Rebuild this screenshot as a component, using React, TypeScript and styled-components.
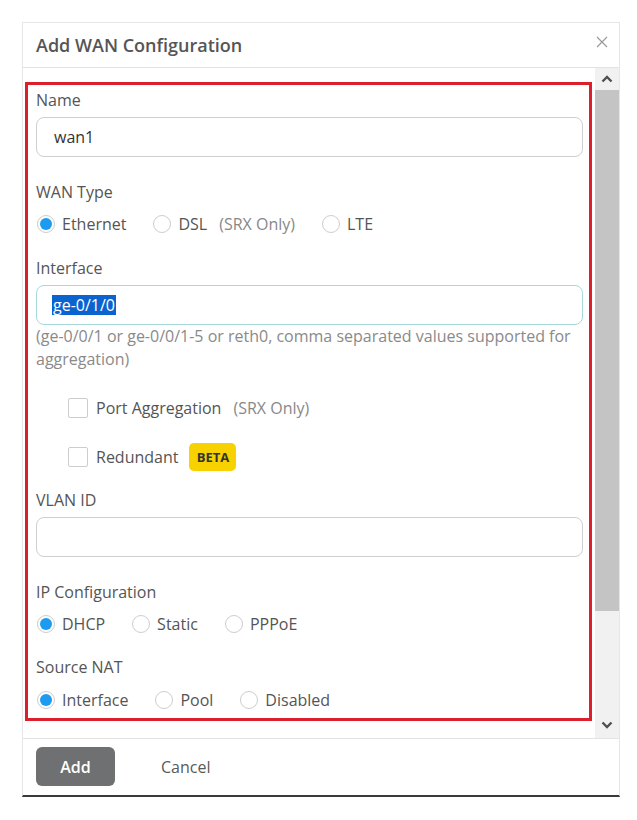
import React from "react";
import styled, { createGlobalStyle } from "styled-components";

const Global = createGlobalStyle`
  html, body { margin: 0; padding: 0; background: #ffffff; }
  body { font-family: "Open Sans", "Noto Sans", Arial, sans-serif; }
  * { box-sizing: border-box; }
`;

const Page = styled.div`
  padding: 22px 0 0 22px;
  width: 637px;
  height: 820px;
`;

const Dialog = styled.div`
  width: 598px;
  background: #fff;
  border: 1px solid #e6e6e6;
  border-bottom: 2px solid #3a3a3a;
  display: flex;
  flex-direction: column;
`;

const Header = styled.div`
  height: 45px;
  border-bottom: 1px solid #e3e3e3;
  display: flex;
  align-items: center;
  justify-content: space-between;
  padding: 0 10px 0 13px;
`;

const Title = styled.div`
  font-size: 18px;
  font-weight: 600;
  color: #555;
  line-height: 44px;
`;

const Close = styled.div`
  width: 14px;
  height: 14px;
  margin-top: -6px;
  display: flex;
  align-items: center;
  justify-content: center;
`;

const Body = styled.div`
  height: 670px;
  display: flex;
  overflow: hidden;
`;

const Content = styled.div`
  flex: 1;
  padding: 14px 3px 0 2px;
`;

const Highlight = styled.div`
  border: 3px solid #dc1f2d;
  padding: 4px 6px 7px 8px;
  display: flex;
  flex-direction: column;
`;

const Scrollbar = styled.div`
  width: 24px;
  background: #f1f1f1;
  display: flex;
  flex-direction: column;
  align-items: stretch;
`;

const Arrow = styled.div<{ $h: number }>`
  height: ${(p) => p.$h}px;
  display: flex;
  align-items: center;
  justify-content: center;
`;

const Thumb = styled.div`
  height: 521px;
  background: #c4c4c4;
`;

const Track = styled.div`
  flex: 1;
`;

const Label = styled.div<{ $mt?: number }>`
  font-size: 16px;
  line-height: 22px;
  color: #555;
  margin-top: ${(p) => p.$mt ?? 0}px;
`;

const TextBox = styled.div<{ $focus?: boolean; $mt?: number }>`
  height: 40px;
  margin-top: ${(p) => p.$mt ?? 6}px;
  border: 1px solid ${(p) => (p.$focus ? "#a6d9db" : "#cfcfcf")};
  border-radius: 8px;
  padding: 0 17px;
  display: flex;
  align-items: center;
  font-size: 16px;
  color: #333;
`;

const Selected = styled.span`
  background: #0b63d0;
  color: #fff;
  line-height: 20px;
  padding: 0 1px;
  margin-left: -2px;
`;

const Help = styled.div`
  font-size: 16px;
  line-height: 23px;
  color: #8a8a8a;
`;

const RadioRow = styled.div<{ $mt: number }>`
  display: flex;
  align-items: center;
  height: 22px;
  margin-top: ${(p) => p.$mt}px;
  margin-left: 1px;
`;

const RadioOpt = styled.div`
  display: flex;
  align-items: center;
  margin-right: 27px;
  font-size: 16px;
  color: #555;
`;

const RadioCircle = styled.span<{ $on?: boolean }>`
  width: 18px;
  height: 18px;
  border-radius: 50%;
  border: 1px solid #cdcdcd;
  background: #fff;
  margin-right: 7px;
  display: flex;
  align-items: center;
  justify-content: center;
  &::after {
    content: "";
    width: 12px;
    height: 12px;
    border-radius: 50%;
    background: ${(p) => (p.$on ? "#1d9bf0" : "transparent")};
  }
`;

const Note = styled.span`
  color: #888;
  margin-left: 12px;
`;

const CheckRow = styled.div<{ $mt: number }>`
  display: flex;
  align-items: center;
  height: 28px;
  margin-top: ${(p) => p.$mt}px;
  padding-left: 32px;
  font-size: 16px;
  color: #555;
`;

const Box = styled.span`
  width: 20px;
  height: 20px;
  border: 1px solid #cdcdcd;
  border-radius: 2px;
  background: #fff;
  margin-right: 8px;
`;

const Beta = styled.span`
  margin-left: 11px;
  height: 28px;
  width: 47px;
  border-radius: 5px;
  background: #f7d100;
  color: #333;
  font-size: 13px;
  font-weight: 700;
  display: flex;
  align-items: center;
  justify-content: center;
`;

const Footer = styled.div`
  height: 57px;
  border-top: 1px solid #e3e3e3;
  display: flex;
  align-items: flex-start;
  padding: 8px 0 0 13px;
`;

const PrimaryBtn = styled.div`
  width: 79px;
  height: 39px;
  border-radius: 6px;
  background: #6e7071;
  color: #fff;
  font-size: 16px;
  font-weight: 600;
  display: flex;
  align-items: center;
  justify-content: center;
`;

const TextBtn = styled.div`
  height: 39px;
  margin-left: 46px;
  font-size: 16px;
  color: #5a5a5a;
  display: flex;
  align-items: center;
`;

const Radio = ({ on, children }: { on?: boolean; children: React.ReactNode }) => (
  <RadioOpt>
    <RadioCircle $on={on} />
    {children}
  </RadioOpt>
);

const Chevron = ({ up }: { up?: boolean }) => (
  <svg width="12" height="8" viewBox="0 0 12 8">
    <path
      d={up ? "M1.5 6.5 L6 2 L10.5 6.5" : "M1.5 1.5 L6 6 L10.5 1.5"}
      fill="none"
      stroke="#505050"
      strokeWidth="2.4"
    />
  </svg>
);

export default function App() {
  return (
    <Page>
      <Global />
      <Dialog>
        <Header>
          <Title>Add WAN Configuration</Title>
          <Close>
            <svg width="12" height="12" viewBox="0 0 12 12">
              <path d="M1 1 L11 11 M11 1 L1 11" stroke="#9a9a9a" strokeWidth="1.2" />
            </svg>
          </Close>
        </Header>
        <Body>
          <Content>
            <Highlight>
              <Label>Name</Label>
              <TextBox>wan1</TextBox>

              <Label $mt={24}>WAN Type</Label>
              <RadioRow $mt={10}>
                <Radio on>Ethernet</Radio>
                <Radio>
                  DSL<Note>(SRX Only)</Note>
                </Radio>
                <Radio>LTE</Radio>
              </RadioRow>

              <Label $mt={22}>Interface</Label>
              <TextBox $focus>
                <Selected>ge-0/1/0</Selected>
              </TextBox>
              <Help>
                (ge-0/0/1 or ge-0/0/1-5 or reth0, comma separated values supported for
                aggregation)
              </Help>

              <CheckRow $mt={23}>
                <Box />
                Port Aggregation<Note>(SRX Only)</Note>
              </CheckRow>
              <CheckRow $mt={21}>
                <Box />
                Redundant<Beta>BETA</Beta>
              </CheckRow>

              <Label $mt={18}>VLAN ID</Label>
              <TextBox />

              <Label $mt={24}>IP Configuration</Label>
              <RadioRow $mt={10}>
                <Radio on>DHCP</Radio>
                <Radio>Static</Radio>
                <Radio>PPPoE</Radio>
              </RadioRow>

              <Label $mt={21}>Source NAT</Label>
              <RadioRow $mt={11}>
                <Radio on>Interface</Radio>
                <Radio>Pool</Radio>
                <Radio>Disabled</Radio>
              </RadioRow>
            </Highlight>
          </Content>
          <Scrollbar>
            <Arrow $h={22}>
              <Chevron up />
            </Arrow>
            <Thumb />
            <Track />
            <Arrow $h={26}>
              <Chevron />
            </Arrow>
          </Scrollbar>
        </Body>
        <Footer>
          <PrimaryBtn>Add</PrimaryBtn>
          <TextBtn>Cancel</TextBtn>
        </Footer>
      </Dialog>
    </Page>
  );
}
